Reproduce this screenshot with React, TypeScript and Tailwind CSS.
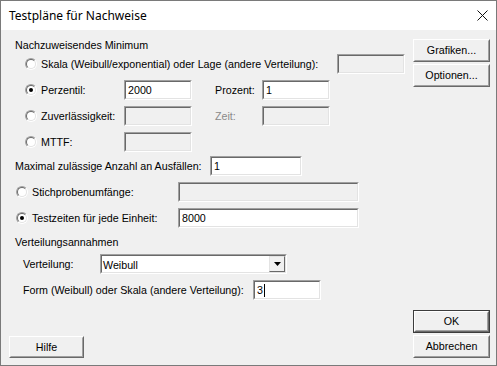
import clsx from "clsx";
import type { ReactNode } from "react";

// sunken edit box, classic 3D border
function Field({ className, value, disabled, caret }: { className?: string; value?: string; disabled?: boolean; caret?: boolean }) {
    return (
        <div className={clsx("shrink-0 border border-t-[#a0a0a0] border-l-[#a0a0a0] border-b-white border-r-white", className)}>
            <div className={clsx(
                "h-full flex items-center pl-[2px] border border-t-[#696969] border-l-[#696969] border-b-[#e3e3e3] border-r-[#e3e3e3]",
                disabled ? "bg-[#f0f0f0]" : "bg-white"
            )}>
                {value}
                {caret && <span className="w-px h-[13px] bg-black ml-px" />}
            </div>
        </div>
    );
}

function Btn({ children, className, isDefault }: { children: ReactNode; className?: string; isDefault?: boolean }) {
    return (
        <div className={clsx("shrink-0", isDefault && "border border-[#3c3c3c]", className)}>
            <div className="h-full border border-t-white border-l-white border-b-[#696969] border-r-[#696969]">
                <div className="h-full flex items-center justify-center border border-t-[#f0f0f0] border-l-[#f0f0f0] border-b-[#a0a0a0] border-r-[#a0a0a0] bg-[#f0f0f0]">
                    {children}
                </div>
            </div>
        </div>
    );
}

function Radio({ checked, className }: { checked?: boolean; className?: string }) {
    return (
        <div className={clsx("shrink-0 w-3 h-3 rounded-full border border-t-[#a0a0a0] border-l-[#a0a0a0] border-b-white border-r-white", className)}>
            <div className="w-full h-full rounded-full flex items-center justify-center bg-white border border-t-[#696969] border-l-[#696969] border-b-[#e3e3e3] border-r-[#e3e3e3]">
                {checked && <div className="w-1 h-1 rounded-full bg-black" />}
            </div>
        </div>
    );
}

export default function App() {
    return (
        <div className="w-[497px] h-[366px] border border-[#7a7a7a] bg-[#f0f0f0] flex flex-col overflow-hidden text-black font-['Liberation_Sans',Arial,sans-serif] text-[10.7px] leading-[13px]">
            <div className="h-[29px] shrink-0 bg-white flex items-center justify-between pl-[8px] pr-[8px]">
                <span className="font-['Noto_Sans',sans-serif] text-[12px] leading-[16px]">Testpläne für Nachweise</span>
                <svg width="11" height="11" viewBox="0 0 11 11" aria-hidden="true">
                    <path d="M0.5 0.5L10.5 10.5M10.5 0.5L0.5 10.5" stroke="#111" strokeWidth="1" />
                </svg>
            </div>

            <div className="flex-1 flex pl-[8px] pr-[6px] pb-[7px]">
                <div className="flex-1 flex flex-col">
                    <div className="mt-[9px] ml-[6px]">Nachzuweisendes Minimum</div>

                    <div className="mt-[2px] h-[20px] flex items-center">
                        <Radio className="ml-[16px]" />
                        <span className="ml-[4px] w-[296px] shrink-0">Skala (Weibull/exponential) oder Lage (andere Verteilung):</span>
                        <Field className="w-[68px] h-full" disabled />
                    </div>

                    <div className="mt-[6px] h-[20px] flex items-center">
                        <Radio className="ml-[16px]" checked />
                        <span className="ml-[4px] w-[83px] shrink-0">Perzentil:</span>
                        <Field className="w-[68px] h-full" value="2000" />
                        <span className="ml-[23px] w-[47px] shrink-0">Prozent:</span>
                        <Field className="w-[68px] h-full" value="1" />
                    </div>

                    <div className="mt-[6px] h-[20px] flex items-center">
                        <Radio className="ml-[16px]" />
                        <span className="ml-[4px] w-[83px] shrink-0">Zuverlässigkeit:</span>
                        <Field className="w-[68px] h-full" disabled />
                        <span className="ml-[23px] w-[47px] shrink-0 text-[#8a8a8a]">Zeit:</span>
                        <Field className="w-[68px] h-full" disabled />
                    </div>

                    <div className="mt-[6px] h-[20px] flex items-center">
                        <Radio className="ml-[16px]" />
                        <span className="ml-[4px] w-[83px] shrink-0">MTTF:</span>
                        <Field className="w-[68px] h-full" disabled />
                    </div>

                    <div className="mt-[4px] h-[20px] flex items-center">
                        <span className="ml-[6px] w-[195px] shrink-0">Maximal zulässige Anzahl an Ausfällen:</span>
                        <Field className="w-[92px] h-full" value="1" />
                    </div>

                    <div className="mt-[6px] h-[20px] flex items-center">
                        <Radio className="ml-[7px]" />
                        <span className="ml-[4px] w-[146px] shrink-0">Stichprobenumfänge:</span>
                        <Field className="w-[181px] h-full" disabled />
                    </div>

                    <div className="mt-[6px] h-[20px] flex items-center">
                        <Radio className="ml-[7px]" checked />
                        <span className="ml-[4px] w-[146px] shrink-0">Testzeiten für jede Einheit:</span>
                        <Field className="w-[181px] h-full" value="8000" />
                    </div>

                    <div className="mt-[8px] ml-[6px]">Verteilungsannahmen</div>

                    <div className="mt-[5px] h-[20px] flex items-center">
                        <span className="ml-[14px] w-[77px] shrink-0">Verteilung:</span>
                        <div className="w-[187px] h-full shrink-0 border border-t-[#a0a0a0] border-l-[#a0a0a0] border-b-white border-r-white">
                            <div className="h-full flex items-center justify-between bg-white border border-t-[#696969] border-l-[#696969] border-b-[#e3e3e3] border-r-[#e3e3e3]">
                                <span className="pl-[1px] pt-[2px]">Weibull</span>
                                <div className="w-[16px] h-full border border-t-[#e3e3e3] border-l-[#e3e3e3] border-b-[#696969] border-r-[#696969] bg-[#f0f0f0] flex items-center justify-center">
                                    <svg width="7" height="4" viewBox="0 0 7 4" aria-hidden="true">
                                        <path d="M0 0H7L3.5 4Z" fill="#000" />
                                    </svg>
                                </div>
                            </div>
                        </div>
                    </div>

                    <div className="mt-[6px] h-[20px] flex items-center">
                        <span className="ml-[14px] w-[230px] shrink-0">Form (Weibull) oder Skala (andere Verteilung):</span>
                        <Field className="w-[68px] h-full" value="3" caret />
                    </div>

                    <Btn className="mt-auto w-[75px] h-[22px]">Hilfe</Btn>
                </div>

                <div className="w-[77px] shrink-0 flex flex-col justify-between pt-[9px]">
                    <div className="flex flex-col gap-[2px]">
                        <Btn className="h-[23px]">Grafiken...</Btn>
                        <Btn className="h-[23px]">Optionen...</Btn>
                    </div>
                    <div className="flex flex-col gap-[2px]">
                        <Btn className="h-[23px]" isDefault>OK</Btn>
                        <Btn className="h-[23px]">Abbrechen</Btn>
                    </div>
                </div>
            </div>
        </div>
    );
}
